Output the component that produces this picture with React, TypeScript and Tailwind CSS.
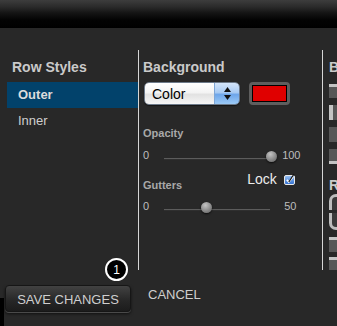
import React from "react";

function Slider({ width, thumb }: { width: number; thumb: number }) {
  return (
    <div className="relative h-[12px]" style={{ width }}>
      <div className="absolute left-0 right-0 top-[7px] h-px bg-[#5c5c5c]" />
      <div className="absolute left-0 right-0 top-[8px] h-px bg-[#2f2f2f]" />
      <div
        className="absolute top-0 h-[11px] w-[11px] rounded-full bg-[radial-gradient(circle_at_40%_30%,#c4c4c4,#8a8a8a_55%,#5e5e5e)] shadow-[0_1px_2px_rgba(0,0,0,0.7)]"
        style={{ left: thumb - 5.5 }}
      />
    </div>
  );
}

function Checkbox() {
  return (
    <svg width="13" height="12" viewBox="0 0 13 12" className="-mt-[1px]">
      <defs>
        <linearGradient id="cb" x1="0" y1="0" x2="0" y2="1">
          <stop offset="0" stopColor="#9cc3f2" />
          <stop offset="1" stopColor="#2f6fd2" />
        </linearGradient>
      </defs>
      <rect x="0.5" y="2.5" width="10" height="9" rx="1.5" fill="url(#cb)" stroke="#e8e8e8" />
      <path d="M2.8 6.8 L4.8 9 L9.2 3.4" fill="none" stroke="#ffffff" strokeWidth="1.6" />
      <path d="M4.8 9 L10 1" fill="none" stroke="#111" strokeWidth="1.2" />
    </svg>
  );
}

function ColorSelect() {
  return (
    <div className="flex h-[23px] w-[96px] overflow-hidden rounded-[5px] border border-[#6d7a8a] shadow-[0_1px_1px_rgba(0,0,0,0.5)]">
      <div className="flex flex-1 items-center bg-[linear-gradient(to_bottom,#ffffff_0%,#f4f4f4_45%,#e2e2e2_55%,#f6f6f6_100%)] pl-[7px] text-[14px] leading-none text-black">
        Color
      </div>
      <div className="flex w-[25px] flex-col items-center justify-center gap-[3px] border-l border-[#7ea6d6] bg-[linear-gradient(to_bottom,#d4e5fa_0%,#a9cbf3_45%,#6ea6ea_55%,#9ccaf6_100%)]">
        <svg width="7" height="5" viewBox="0 0 7 5">
          <path d="M3.5 0 L7 5 L0 5 Z" fill="#111" />
        </svg>
        <svg width="7" height="5" viewBox="0 0 7 5">
          <path d="M0 0 L7 0 L3.5 5 Z" fill="#111" />
        </svg>
      </div>
    </div>
  );
}

export default function App() {
  return (
    <div className="relative flex h-[326px] w-[337px] flex-col overflow-hidden bg-[#282828] font-['Liberation_Sans',Arial,sans-serif]">
      {/* top bar */}
      <div className="h-[28px] bg-[linear-gradient(to_bottom,#3d3d3d_0px,#2a2a2a_7px,#141414_13px,#030303_20px,#000_28px)]" />

      {/* columns */}
      <div className="mt-[22px] flex h-[220px]">
        {/* row styles */}
        <div className="w-[138px] pl-[7px]">
          <div className="mt-[9px] pl-[5px] text-[14px] font-bold leading-[16px] text-[#cacaca]">Row Styles</div>
          <div className="mt-[7px] flex h-[26px] items-center bg-[#02426b] pl-[11px] text-[13px] font-bold text-[#dcdcdc]">
            Outer
          </div>
          <div className="flex h-[26px] items-center pl-[11px] text-[13px] text-[#cfcfcf]">Inner</div>
        </div>

        <div className="w-px bg-[#d6d6d6]" />

        {/* background */}
        <div className="w-[183px] pl-[4px]">
          <div className="mt-[9px] text-[14px] font-bold leading-[16px] text-[#cacaca]">Background</div>
          <div className="mt-[7px] ml-[1px] flex items-center gap-[9px]">
            <ColorSelect />
            <div className="flex h-[23px] w-[41px] items-center justify-center rounded-[4px] bg-[#5e5e5e]">
              <div className="h-[17px] w-[35px] border border-black bg-[#e00000]" />
            </div>
          </div>

          <div className="mt-[22px] text-[11px] font-bold leading-[13px] text-[#a9a9a9]">Opacity</div>
          <div className="mt-[11px] flex items-start">
            <span className="-mt-[1px] text-[11px] leading-[11px] text-[#bdbdbd]">0</span>
            <div className="ml-[15px]">
              <Slider width={107} thumb={107} />
            </div>
            <span className="-mt-[1px] ml-[11px] text-[11px] leading-[11px] text-[#bdbdbd]">100</span>
          </div>

          <div className="mt-[8px] flex items-start">
            <div className="mt-[8px] text-[11px] font-bold leading-[13px] text-[#a9a9a9]">Gutters</div>
            <div className="ml-[65px] flex items-center gap-[7px]">
              <span className="text-[14px] leading-[16px] text-[#ececec]">Lock</span>
              <Checkbox />
            </div>
          </div>

          <div className="mt-[10px] flex items-start">
            <span className="-mt-[1px] text-[11px] leading-[11px] text-[#bdbdbd]">0</span>
            <div className="ml-[15px]">
              <Slider width={106} thumb={42} />
            </div>
            <span className="-mt-[1px] ml-[14px] text-[11px] leading-[11px] text-[#bdbdbd]">50</span>
          </div>
        </div>

        <div className="w-px bg-[#d6d6d6]" />

        {/* cut off borders column */}
        <div className="flex-1 overflow-hidden pl-[6px]">
          <div className="mt-[9px] text-[14px] font-bold leading-[16px] text-[#cacaca]">B</div>
          <div className="mt-[9px] h-[14px] w-[20px] border-t-[3px] border-[#c4c4c4] bg-[#575757]" />
          <div className="mt-[7px] h-[15px] w-[20px] border-l-[4px] border-[#c4c4c4] bg-[#575757]" />
          <div className="mt-[7px] h-[15px] w-[20px] bg-[#575757]" />
          <div className="mt-[7px] h-[15px] w-[20px] border-b-[3px] border-[#c4c4c4] bg-[#575757]" />
          <div className="mt-[13px] text-[14px] font-bold leading-[16px] text-[#cacaca]">R</div>
          <div className="mt-[1px] h-[16px] w-[20px] rounded-tl-[7px] border-l-[3px] border-t-[3px] border-[#bdbdbd] bg-[#3a3a3a]" />
          <div className="mt-[3px] h-[17px] w-[20px] rounded-bl-[7px] border-b-[3px] border-l-[3px] border-[#bdbdbd] bg-[#3a3a3a]" />
          <div className="mt-[7px] h-[15px] w-[20px] border-t-[3px] border-[#c4c4c4] bg-[#575757]" />
          <div className="mt-[5px] h-[25px] w-[20px] border-t-[3px] border-[#c4c4c4] bg-[#575757]" />
        </div>
      </div>

      {/* buttons */}
      <div className="mt-[15px] flex items-start pl-[5px]">
        <button className="h-[27px] w-[126px] rounded-[4px] border border-[#161616] bg-[linear-gradient(to_bottom,#424242,#262626_60%,#1c1c1c)] pt-[2px] text-center text-[13px] leading-[15px] text-[#cfcfcf] shadow-[0_1px_0_#4a4a4a,0_2px_3px_rgba(0,0,0,0.6)]">
          SAVE CHANGES
        </button>
        <span className="ml-[17px] mt-[2px] text-[13px] leading-[15px] text-[#cfcfcf]">CANCEL</span>
      </div>

      <div className="absolute left-0 top-[298px] h-[28px] w-[4px] bg-black" />

      {/* step badge */}
      <div className="absolute left-[105px] top-[258px] flex h-[23px] w-[23px] items-center justify-center rounded-full border-2 border-white bg-black text-[12px] leading-none text-white">
        1
      </div>
    </div>
  );
}
